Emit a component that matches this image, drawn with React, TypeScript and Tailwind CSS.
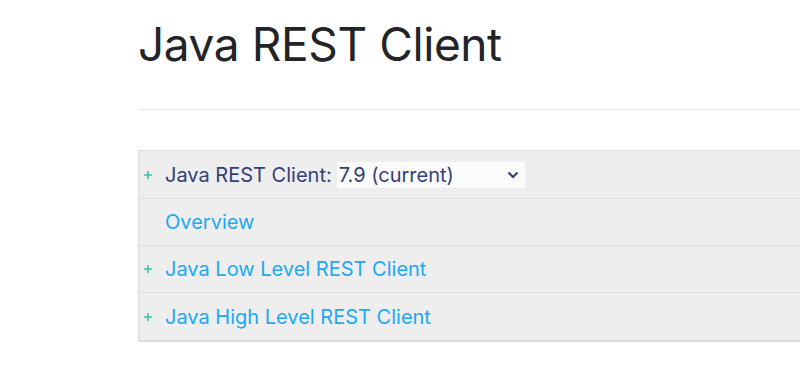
const items = [
  { label: "Overview", plus: false },
  { label: "Java Low Level REST Client", plus: true },
  { label: "Java High Level REST Client", plus: true },
]

function Plus() {
  return (
    <span className="flex w-[26px] shrink-0 pl-[5px]">
      <svg width="8" height="8" viewBox="0 0 8 8">
        <path d="M4 0v8M0 4h8" stroke="#3ebeb0" strokeWidth="1.6" />
      </svg>
    </span>
  )
}

export default function App() {
  return (
    <div className="h-[372px] w-[800px] overflow-hidden bg-white pl-[138px] font-['Inter',sans-serif]">
      {/* TITLE */}
      <h1 className="pt-[15px] text-[46px] font-normal leading-[58px] tracking-[-0.4px] text-[#222428]">Java REST Client</h1>
      <div className="mt-[36px] h-px bg-[#e4e4e4]" />

      {/* TOC */}
      <div className="mt-[40px] border-t border-l border-b-2 border-[#dddddd] bg-[#eeeeee]">
        <div className="flex h-[48px] items-center border-b border-[#dddddd]">
          <Plus />
          <span className="text-[20px] text-[#343f78]">Java REST Client:</span>
          <div className="ml-[5px] flex h-[26px] w-[188px] items-center justify-between bg-[#fbfbfb] pl-[2px] pr-[6px]">
            <span className="text-[20px] text-[#343f78]">7.9 (current)</span>
            <svg width="12" height="8" viewBox="0 0 12 8" fill="none">
              <path d="M1.5 1.5 6 6l4.5-4.5" stroke="#343f78" strokeWidth="2.2" />
            </svg>
          </div>
        </div>
        {items.map((item, i) => (
          <div
            key={item.label}
            className={`flex h-[47px] items-center ${i < items.length - 1 ? "border-b border-[#dddddd]" : ""}`}
          >
            {item.plus ? <Plus /> : <span className="w-[26px] shrink-0" />}
            <span className="text-[20px] text-[#1ba9f5]">{item.label}</span>
          </div>
        ))}
      </div>
    </div>
  )
}
